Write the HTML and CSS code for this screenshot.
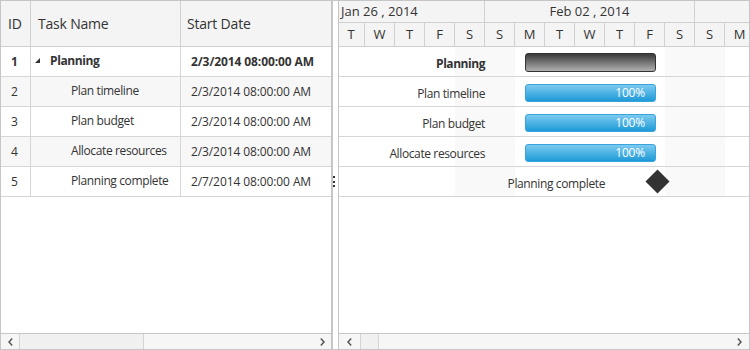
FILE: index.html
```html
<!DOCTYPE html>
<html>
<head>
<meta charset="utf-8">
<link rel="stylesheet" href="styles.css">
</head>
<body>
<div class="gantt">
  <div class="grid-pane">
    <div class="grid-head">
      <div class="gh c-id">ID</div>
      <div class="gh c-name">Task Name</div>
      <div class="gh c-date">Start Date</div>
    </div>
    <div class="grid-body">
      <div class="grow parent">
        <div class="gc c-id">1</div>
        <div class="gc c-name lvl0"><svg class="exp" width="5" height="5" viewBox="0 0 5 5"><polygon points="5,0 5,5 0,5" fill="#333"/></svg><span class="nm">Planning</span></div>
        <div class="gc c-date">2/3/2014 08:00:00 AM</div>
      </div>
      <div class="grow">
        <div class="gc c-id">2</div>
        <div class="gc c-name lvl1"><span class="nm">Plan timeline</span></div>
        <div class="gc c-date">2/3/2014 08:00:00 AM</div>
      </div>
      <div class="grow">
        <div class="gc c-id">3</div>
        <div class="gc c-name lvl1"><span class="nm">Plan budget</span></div>
        <div class="gc c-date">2/3/2014 08:00:00 AM</div>
      </div>
      <div class="grow">
        <div class="gc c-id">4</div>
        <div class="gc c-name lvl1"><span class="nm">Allocate resources</span></div>
        <div class="gc c-date">2/3/2014 08:00:00 AM</div>
      </div>
      <div class="grow">
        <div class="gc c-id">5</div>
        <div class="gc c-name lvl1"><span class="nm">Planning complete</span></div>
        <div class="gc c-date">2/7/2014 08:00:00 AM</div>
      </div>
    </div>
    <div class="hscroll">
      <div class="sbtn sb-left"><svg width="5" height="8" viewBox="0 0 5 8"><polyline points="4.2,0.6 1,4 4.2,7.4" fill="none" stroke="#555" stroke-width="1.5"/></svg></div>
      <div class="thumb thumb-grid"></div>
      <div class="track"></div>
      <div class="sbtn sb-right"><svg width="5" height="8" viewBox="0 0 5 8"><polyline points="0.8,0.6 4,4 0.8,7.4" fill="none" stroke="#555" stroke-width="1.5"/></svg></div>
    </div>
  </div>
  <div class="splitter">
    <span class="dot"></span><span class="dot"></span><span class="dot"></span>
  </div>
  <div class="chart-pane">
    <div class="tl-head">
      <div class="weeks">
        <div class="week week-first">Jan 26 , 2014</div>
        <div class="week">Feb 02 , 2014</div>
        <div class="week week-last"></div>
      </div>
      <div class="days">
        <div class="day day-first">T</div><div class="day">W</div><div class="day">T</div><div class="day">F</div><div class="day">S</div>
        <div class="day">S</div><div class="day">M</div><div class="day">T</div><div class="day">W</div><div class="day">T</div><div class="day">F</div><div class="day">S</div>
        <div class="day">S</div><div class="day">M</div>
      </div>
    </div>
    <div class="chart-body">
      <div class="chart-rows">
        <div class="crow">
          <div class="clabel bold" style="width:146px">Planning</div>
          <div class="bar bar-parent" style="width:131px"></div>
        </div>
        <div class="crow">
          <div class="clabel" style="width:146px">Plan timeline</div>
          <div class="bar bar-child" style="width:131px">100%</div>
        </div>
        <div class="crow">
          <div class="clabel" style="width:146px">Plan budget</div>
          <div class="bar bar-child" style="width:131px">100%</div>
        </div>
        <div class="crow">
          <div class="clabel" style="width:146px">Allocate resources</div>
          <div class="bar bar-child" style="width:131px">100%</div>
        </div>
        <div class="crow">
          <div class="clabel" style="width:266px">Planning complete</div>
          <div class="milestone"></div>
        </div>
      </div>
    </div>
    <div class="hscroll">
      <div class="sbtn sb-left2"><svg width="5" height="8" viewBox="0 0 5 8"><polyline points="4.2,0.6 1,4 4.2,7.4" fill="none" stroke="#555" stroke-width="1.5"/></svg></div>
      <div class="thumb thumb-chart"></div>
      <div class="track"></div>
      <div class="sbtn sb-right2"><svg width="5" height="8" viewBox="0 0 5 8"><polyline points="0.8,0.6 4,4 0.8,7.4" fill="none" stroke="#555" stroke-width="1.5"/></svg></div>
    </div>
  </div>
</div>
</body>
</html>
```
FILE: styles.css
```css
* { box-sizing: border-box; }
body { margin: 0; font-family: "Open Sans", "Noto Sans", sans-serif; color: #333; background: #fff; }

.gantt {
  width: 750px; height: 350px;
  border: 1px solid #c6c6c6;
  display: flex;
  overflow: hidden;
  background: #fff;
}

/* ---------- grid ---------- */
.grid-pane {
  width: 332px; flex: none;
  border-right: 2px solid #c6c6c6;
  display: flex; flex-direction: column;
}
.grid-head {
  display: flex; height: 46px; flex: none;
  background: #f4f4f4;
  border-bottom: 1px solid #d0d0d0;
}
.gh {
  display: flex; align-items: center;
  font-size: 14px; color: #333;
  border-right: 1px solid #d0d0d0;
  padding-left: 7px;
  letter-spacing: -0.2px;
}
.c-id { width: 30px; flex: none; }
.c-name { width: 150px; flex: none; }
.c-date { width: 150px; flex: none; border-right: none; }
.gh.c-date { padding-left: 6px; }

.grid-body { flex: 1; }
.grow {
  display: flex; height: 30px;
  border-bottom: 1px solid #d6d6d6;
  font-size: 12px;
}
.grow:nth-child(even) { background: #f7f7f7; }
.grow.parent { font-weight: bold; }
.gc {
  display: flex; align-items: center;
  border-right: 1px solid #d6d6d6;
  padding-left: 10px;
  white-space: nowrap;
}
.gc.c-date { border-right: none; letter-spacing: -0.1px; }
.gc.lvl0 { padding-left: 4px; }
.gc.lvl1 { padding-left: 40px; }
.gc .nm { position: relative; top: -1px; letter-spacing: -0.38px; }
.exp { margin-right: 10px; margin-top: -3px; }

/* ---------- scrollbars ---------- */
.hscroll {
  flex: none; height: 16px;
  border-top: 1px solid #c6c6c6;
  background: #f6f6f6;
  display: flex;
}
.sbtn { display: flex; align-items: center; justify-content: center; flex: none; }
.sb-left { width: 19px; border-right: 1px solid #d4d4d4; }
.sb-right { width: 18px; }
.thumb { flex: none; background: #f0f0f0; border-right: 1px solid #d4d4d4; }
.thumb-grid { width: 124px; }
.track { flex: 1; }
.sb-left2 { width: 22px; border-right: 1px solid #d4d4d4; }
.sb-right2 { width: 20px; }
.thumb-chart { width: 18px; }

/* ---------- splitter ---------- */
.splitter {
  width: 5px; flex: none;
  display: flex; flex-direction: column;
  padding-top: 175px; gap: 2.5px;
}
.dot { width: 2px; height: 2px; background: #333; }

/* ---------- chart ---------- */
.chart-pane {
  flex: 1; min-width: 0;
  border-left: 1px solid #c6c6c6;
  display: flex; flex-direction: column;
  overflow: hidden;
}
.tl-head {
  flex: none; height: 46px;
  background: #f4f4f4;
  border-bottom: 1px solid #d0d0d0;
  overflow: hidden;
}
.weeks {
  display: flex; height: 22px;
  border-bottom: 1px solid #d0d0d0;
}
.week {
  flex: none; width: 210px;
  border-right: 1px solid #d0d0d0;
  text-align: center; font-size: 13px; line-height: 21px;
  white-space: nowrap;
}
.week-first { width: 146px; text-align: left; padding-left: 2px; }
.week-last { flex: 1; width: auto; border-right: none; }
.days { display: flex; height: 23px; }
.day {
  flex: none; width: 30px;
  border-right: 1px solid #d0d0d0;
  text-align: center; font-size: 13px; line-height: 22px;
}
.day-first { width: 26px; padding-right: 1px; }

.chart-body { flex: 1; }
.chart-rows {
  background-image: linear-gradient(to right,
    transparent 116px, #f9f9f9 116px, #f9f9f9 176px, transparent 176px,
    transparent 326px, #f9f9f9 326px, #f9f9f9 386px, transparent 386px);
}
.crow {
  display: flex; align-items: center;
  height: 30px;
  border-bottom: 1px solid #d6d6d6;
}
.clabel {
  flex: none; text-align: right;
  font-size: 12px; margin-right: 40px;
  letter-spacing: -0.38px;
  white-space: nowrap; color: #333;
  position: relative; top: 2px;
}
.clabel.bold { font-weight: bold; letter-spacing: -0.45px; }
.bar {
  flex: none; height: 18px; border-radius: 3px;
  position: relative; top: 1px;
}
.bar-parent {
  height: 19px;
  border: 1px solid #333;
  background: linear-gradient(to bottom, #3a3a3a, #b0b0b0);
}
.bar-child {
  border: 1px solid #3aa3dc;
  background: linear-gradient(to bottom, #7ccbf0, #1e9ad7);
  color: #fff; font-size: 12px;
  letter-spacing: -0.2px;
  text-align: right; padding-right: 10px; line-height: 16px;
}
.milestone {
  flex: none; width: 24px; height: 24px;
  display: flex; align-items: center; justify-content: center;
}
.milestone::before {
  content: ""; width: 17px; height: 17px;
  background: #333; transform: rotate(45deg);
}
```
